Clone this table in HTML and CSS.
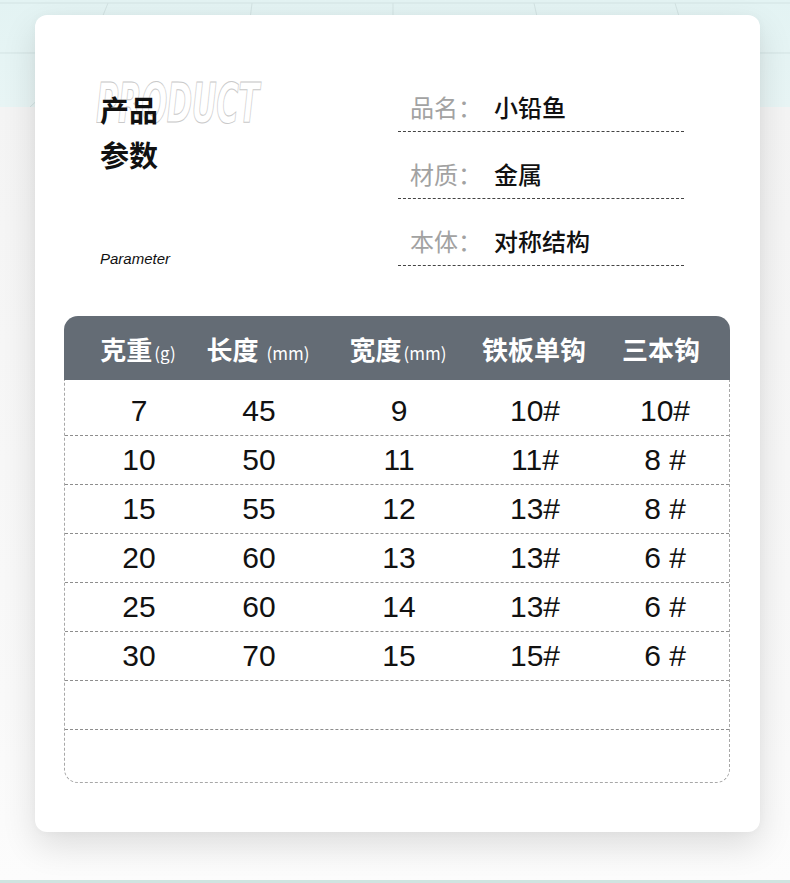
FILE: index.html
```html
<!DOCTYPE html>
<html lang="zh">
<head>
<meta charset="utf-8">
<link rel="stylesheet" href="styles.css">
</head>
<body>
<svg class="floor" width="790" height="107" viewBox="0 0 790 107">
  <g stroke="#d3e3e3" stroke-width="1" fill="none">
    <line x1="0" y1="3" x2="790" y2="3"/>
    <line x1="0" y1="53" x2="790" y2="53"/>
    <line x1="108" y1="3" x2="88" y2="53"/>
    <line x1="88" y1="53" x2="30" y2="107"/>
    <line x1="252" y1="3" x2="246" y2="53"/>
    <line x1="393" y1="3" x2="393" y2="53"/>
    <line x1="534" y1="3" x2="545" y2="53"/>
    <line x1="675" y1="3" x2="690" y2="53"/>
  </g>
</svg>
<div class="page">
  <div class="card">
    <div class="top">
      <div class="intro">
        <div class="bgword">PRODUCT</div>
        <div class="title">产品<br>参数</div>
        <div class="sub">Parameter</div>
      </div>
      <div class="specs">
        <div class="spec"><span class="label">品名：</span><span class="value">小铅鱼</span></div>
        <div class="spec"><span class="label">材质：</span><span class="value">金属</span></div>
        <div class="spec"><span class="label">本体：</span><span class="value">对称结构</span></div>
      </div>
    </div>
    <div class="table">
      <div class="thead row">
        <div class="c c1">克重<span class="unit">(g)</span></div>
        <div class="c c2">长度&nbsp;<span class="unit">(mm)</span></div>
        <div class="c c3">宽度<span class="unit">(mm)</span></div>
        <div class="c c4">铁板单钩</div>
        <div class="c c5">三本钩</div>
      </div>
      <div class="tbody">
        <div class="row trow"><div class="c c1">7</div><div class="c c2">45</div><div class="c c3">9</div><div class="c c4">10#</div><div class="c c5">10#</div></div>
        <div class="row trow"><div class="c c1">10</div><div class="c c2">50</div><div class="c c3">11</div><div class="c c4">11#</div><div class="c c5">8&nbsp;#</div></div>
        <div class="row trow"><div class="c c1">15</div><div class="c c2">55</div><div class="c c3">12</div><div class="c c4">13#</div><div class="c c5">8&nbsp;#</div></div>
        <div class="row trow"><div class="c c1">20</div><div class="c c2">60</div><div class="c c3">13</div><div class="c c4">13#</div><div class="c c5">6&nbsp;#</div></div>
        <div class="row trow"><div class="c c1">25</div><div class="c c2">60</div><div class="c c3">14</div><div class="c c4">13#</div><div class="c c5">6&nbsp;#</div></div>
        <div class="row trow"><div class="c c1">30</div><div class="c c2">70</div><div class="c c3">15</div><div class="c c4">15#</div><div class="c c5">6&nbsp;#</div></div>
        <div class="row trow"></div>
        <div class="row trow last"></div>
      </div>
    </div>
  </div>
</div>
</body>
</html>
```

FILE: styles.css
```css
html, body {
  margin: 0;
  padding: 0;
}
body {
  width: 790px;
  height: 883px;
  position: relative;
  overflow: hidden;
  font-family: "Noto Sans CJK SC", "Noto Sans", sans-serif;
  background:
    linear-gradient(to bottom, transparent 0, transparent 880px, #cfe4e0 880px),
    linear-gradient(to bottom, #e3f3f3 0, #e8f5f5 107px, #f4f4f4 107px, #f9f9f9 700px, #fcfcfc 880px);
}
.floor {
  position: absolute;
  left: 0;
  top: 0;
}
.page {
  position: relative;
  padding-top: 15px;
  padding-left: 35px;
}
.card {
  width: 725px;
  height: 817px;
  background: #fff;
  border-radius: 12px;
  box-shadow: 0 14px 34px rgba(0, 0, 0, 0.12), 0 0 8px rgba(0, 0, 0, 0.03);
  box-sizing: border-box;
  padding-top: 49px;
}
.top {
  display: flex;
  padding-left: 65px;
  height: 204px;
}
.intro {
  width: 298px;
  position: relative;
  padding-top: 23px;
}
.bgword {
  position: absolute;
  left: -4px;
  top: 12px;
  font-family: "DejaVu Sans", sans-serif;
  font-weight: 700;
  font-style: italic;
  font-size: 55px;
  line-height: 55px;
  letter-spacing: -1px;
  color: transparent;
  -webkit-text-stroke: 1px #c9c9c9;
  transform: scaleX(0.56);
  transform-origin: left top;
  white-space: nowrap;
}
.title {
  position: relative;
  font-size: 29px;
  font-weight: 700;
  line-height: 45px;
  color: #111;
}
.sub {
  margin-top: 73px;
  font-family: "Liberation Sans", Arial, sans-serif;
  font-style: italic;
  font-size: 15px;
  line-height: 18px;
  color: #111;
}
.specs {
  width: 286px;
  padding-top: 1px;
}
.spec {
  box-sizing: border-box;
  height: 67px;
  display: flex;
  align-items: flex-end;
  padding: 0 0 7px 12px;
  line-height: 34px;
  border-bottom: 1px dashed #444;
  white-space: nowrap;
}
.label {
  display: inline-block;
  width: 84px;
  font-size: 24px;
  color: #a2a2a2;
}
.value {
  font-size: 24px;
  font-weight: 500;
  color: #111;
}
.table {
  margin-top: 48px;
  margin-left: 29px;
  width: 666px;
}
.row {
  display: grid;
  grid-template-columns: 148px 92px 188px 84px 154px;
  align-items: center;
}
.c {
  display: flex;
  justify-content: center;
  align-items: baseline;
  white-space: nowrap;
}
.c5 {
  padding-left: 22px;
}
.thead {
  height: 64px;
  background: #646c75;
  border-radius: 14px 14px 0 0;
  color: #fff;
  font-size: 26px;
  font-weight: 700;
}
.thead .c5 {
  padding-left: 16px;
}
.unit {
  font-size: 17px;
  font-weight: 400;
  margin-left: 2px;
}
.tbody {
  border: 1px dashed #a8a8a8;
  border-top: none;
  border-radius: 0 0 14px 14px;
  padding-top: 7px;
}
.trow {
  height: 48px;
  border-bottom: 1px dashed #8d8d8d;
  font-family: "Liberation Sans", Arial, sans-serif;
  font-size: 30px;
  color: #111;
}
.trow.last {
  height: 52px;
  border-bottom: none;
}
```
